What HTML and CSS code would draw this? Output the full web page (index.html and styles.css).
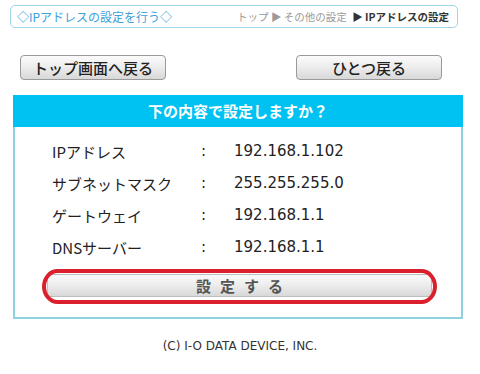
FILE: index.html
```html
<!DOCTYPE html>
<html lang="ja">
<head>
    <meta charset="UTF-8">
    <title>IPアドレスの設定</title>
    <link rel="stylesheet" href="styles.css">
</head>
<body>
    <div class="title-bar">
        <span class="title">◇IPアドレスの設定を行う◇</span>
        <span class="crumbs">トップ ▶ その他の設定 <b>▶ IPアドレスの設定</b></span>
    </div>

    <div class="nav">
        <button class="btn btn-nav">トップ画面へ戻る</button>
        <button class="btn btn-nav">ひとつ戻る</button>
    </div>

    <div class="panel">
        <div class="panel-head">下の内容で設定しますか？</div>
        <div class="rows">
            <div class="row"><span class="label">IPアドレス</span><span class="sep">:</span><span class="value">192.168.1.102</span></div>
            <div class="row"><span class="label">サブネットマスク</span><span class="sep">:</span><span class="value">255.255.255.0</span></div>
            <div class="row"><span class="label">ゲートウェイ</span><span class="sep">:</span><span class="value">192.168.1.1</span></div>
            <div class="row"><span class="label">DNSサーバー</span><span class="sep">:</span><span class="value">192.168.1.1</span></div>
        </div>
        <div class="submit-wrap">
            <button class="btn btn-submit">設定する</button>
            <span class="mark"></span>
        </div>
    </div>

    <div class="footer">(C) I-O DATA DEVICE, INC.</div>
</body>
</html>
```

FILE: styles.css
```css
body {
    margin: 0;
    width: 480px;
    background: #fff;
    font-family: "Noto Sans CJK JP", "DejaVu Sans", sans-serif;
    color: #222;
}
.title-bar {
    margin: 5px 22px 0 10px;
    height: 21px;
    border: 1px solid #9fd5e6;
    border-radius: 5px;
    display: flex;
    justify-content: space-between;
    align-items: center;
    padding: 0 8px 0 6px;
}
.title {
    color: #3d9fdc;
    font-size: 12px;
}
.crumbs {
    color: #9a9a9a;
    font-size: 10.5px;
}
.crumbs b {
    color: #333;
    margin-left: 3px;
}
.nav {
    display: flex;
    justify-content: space-between;
    margin-top: 27px;
    padding: 0 38px 0 20px;
}
.btn {
    font-family: "Noto Sans CJK JP", sans-serif;
    color: #222;
    cursor: pointer;
    background: linear-gradient(#fbfbfb, #ececec 50%, #d8d8d8);
    border: 1px solid #9a9a9a;
    border-radius: 4px;
    padding: 0;
}
.btn-nav {
    width: 146px;
    height: 25px;
    font-size: 15px;
    font-weight: 500;
    line-height: 23px;
}
.panel {
    margin: 15px 0 0 13px;
    width: 446px;
    border: 2px solid #8dd2de;
    border-top: none;
}
.panel-head {
    background: #00c2f2;
    color: #fff;
    font-weight: bold;
    font-size: 15px;
    height: 32px;
    line-height: 32px;
    text-align: center;
    margin: 0 -2px;
}
.rows {
    padding: 8px 0 0 37px;
}
.row {
    display: flex;
    height: 32px;
    align-items: center;
    font-size: 15px;
}
.label {
    width: 149px;
}
.sep {
    width: 33px;
    font-family: "DejaVu Sans", sans-serif;
}
.value {
    font-family: "DejaVu Sans", sans-serif;
    font-size: 15px;
}
.submit-wrap {
    position: relative;
    margin: 11px 29px 20px 32px;
}
.btn-submit {
    display: block;
    width: 100%;
    height: 23px;
    font-size: 15px;
    font-weight: bold;
    letter-spacing: 9px;
    padding-left: 9px;
    line-height: 21px;
    color: #555;
    border-color: #bdbdbd;
    border-radius: 3px;
}
.mark {
    position: absolute;
    left: -5px;
    right: -5px;
    top: -5px;
    bottom: -7px;
    border: 4px solid #d9202c;
    border-radius: 16px / 18px;
    pointer-events: none;
}
.footer {
    text-align: center;
    font-family: "DejaVu Sans", sans-serif;
    font-size: 12px;
    color: #333;
    margin-top: 20px;
}
```
